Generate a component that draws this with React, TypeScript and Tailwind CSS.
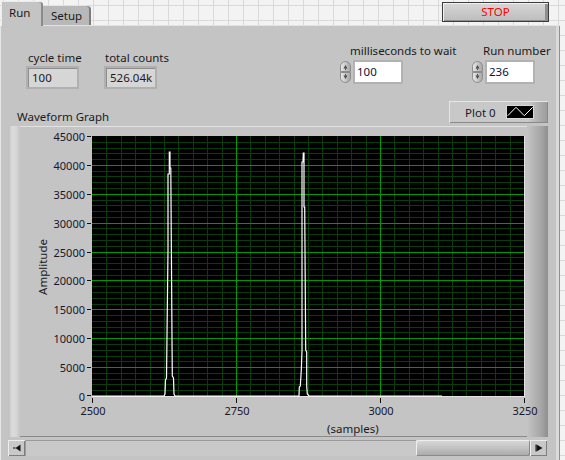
import React from 'react';

const X_MIN = 2500;
const X_MAX = 3250;
const Y_MAX = 45000;
const PLOT_W = 432;
const PLOT_H = 260;
const PAD_L = 6;

const px = (x: number) => PAD_L + ((x - X_MIN) / (X_MAX - X_MIN)) * PLOT_W;
const py = (y: number) => PLOT_H - (y / Y_MAX) * PLOT_H;

// trace as screen pixels of the original panel (plot corner at 86,136)
const trace: [number, number][] = [
    [92, 396], [164, 396], [165, 394], [165.5, 380], [166.5, 378], [168, 250],
    [168, 174], [169.3, 174], [169.3, 152], [170, 152], [170, 168], [170.8, 168],
    [172, 340], [172.3, 376], [173.5, 378], [174, 394], [175, 396],
    [299, 396], [299.3, 387], [300.3, 386], [301.3, 370], [302, 350], [302, 162],
    [303, 162], [303.3, 153], [304, 153], [304, 207], [304.7, 207], [305.7, 350],
    [306.7, 352], [306.7, 386], [307.3, 394], [309, 396], [442, 396],
];

const yTicks = [45000, 40000, 35000, 30000, 25000, 20000, 15000, 10000, 5000, 0];
const xTicks = [2500, 2750, 3000, 3250];

function Spinner() {
    return (
        <svg width="13" height="24" viewBox="0 0 13 24" className="shrink-0">
            <defs>
                <linearGradient id="spin" x1="0" x2="1">
                    <stop offset="0" stopColor="#ececec" />
                    <stop offset="1" stopColor="#a4a4a4" />
                </linearGradient>
            </defs>
            <path d="M1.5 11.5 V6.5 a5 5 0 0 1 10 0 V11.5 Z" fill="url(#spin)" stroke="#8c8c8c" />
            <path d="M1.5 12.5 V17.5 a5 5 0 0 0 10 0 V12.5 Z" fill="url(#spin)" stroke="#8c8c8c" />
            <path d="M4.5 8.5 L6.5 5 L8.5 8.5 Z" fill="#4a4a4a" />
            <path d="M6 8.5 H7 V10 H6 Z" fill="#4a4a4a" />
            <path d="M4.5 15.5 L6.5 19 L8.5 15.5 Z" fill="#4a4a4a" />
            <path d="M6 14 H7 V15.5 H6 Z" fill="#4a4a4a" />
        </svg>
    );
}

function NumericControl({ label, value, labelPad }: { label: string; value: string; labelPad: string }) {
    return (
        <div className="flex flex-col">
            <span className={`${labelPad} leading-[15px] whitespace-nowrap`}>{label}</span>
            <div className="mt-[2px] flex h-[24px] items-center">
                <Spinner />
                <div className="ml-px flex h-[24px] w-[50px] items-center border-2 border-[#b2b2b2] bg-white pl-[2px] text-[#10103a]">
                    {value}
                </div>
            </div>
        </div>
    );
}

function Indicator({ label, value, labelPad }: { label: string; value: string; labelPad: string }) {
    return (
        <div className="flex flex-col">
            <span className={`${labelPad} leading-[15px] whitespace-nowrap`}>{label}</span>
            <div className="mt-px flex h-[23px] w-[53px] items-center border-2 border-[#b0b0b0] bg-[#d6d6d6] pl-[4px] shadow-[inset_1px_1px_0_#8e8e8e]">
                {value}
            </div>
        </div>
    );
}

function Plot() {
    const minorV: number[] = [];
    const majorV: number[] = [];
    for (let i = 1; i < 30; i++) {
        const x = Math.round(PAD_L + i * 14.4) + 0.5;
        (i % 10 === 0 ? majorV : minorV).push(x);
    }
    const minorH: number[] = [];
    const majorH: number[] = [];
    for (let j = 1; j < 45; j++) {
        const y = Math.round((j * PLOT_H) / 45) + 0.5;
        (j % 5 === 0 ? majorH : minorH).push(y);
    }
    const points = trace.map(([x, y]) => `${x - 86},${y - 136}`).join(' ');

    return (
        <svg width="439" height="268" viewBox="0 0 439 268" className="ml-px mt-[6px] shrink-0">
            <rect x={PAD_L} y="0" width={PLOT_W} height={PLOT_H} fill="#000" />
            <g shapeRendering="crispEdges" strokeWidth="1">
                {minorV.map((x) => (
                    <line key={`mv${x}`} x1={x} x2={x} y1="0" y2={PLOT_H} stroke="#0a3d0a" />
                ))}
                {minorH.map((y) => (
                    <line key={`mh${y}`} x1={PAD_L} x2={PAD_L + PLOT_W} y1={y} y2={y} stroke="#0a3d0a" />
                ))}
                {majorV.map((x) => (
                    <line key={`Mv${x}`} x1={x} x2={x} y1="0" y2={PLOT_H} stroke="#009a00" />
                ))}
                {majorH.map((y) => (
                    <line key={`Mh${y}`} x1={PAD_L} x2={PAD_L + PLOT_W} y1={y} y2={y} stroke="#009a00" />
                ))}
                <line x1={PAD_L} x2={PAD_L + PLOT_W + 1} y1={PLOT_H + 0.5} y2={PLOT_H + 0.5} stroke="#e4e4e4" />
                <line x1={PAD_L + PLOT_W + 0.5} x2={PAD_L + PLOT_W + 0.5} y1="0" y2={PLOT_H + 1} stroke="#e4e4e4" />
                {yTicks.map((v) => {
                    const y = Math.min(Math.round(py(v)) + 0.5, PLOT_H - 0.5);
                    return <line key={`yt${v}`} x1="1" x2="5" y1={y} y2={y} stroke="#111" />;
                })}
                {xTicks.map((v) => {
                    const x = Math.round(px(v)) + 0.5;
                    return <line key={`xt${v}`} x1={x} x2={x} y1={PLOT_H + 2} y2={PLOT_H + 7} stroke="#111" />;
                })}
            </g>
            <polyline points={points} fill="none" stroke="#fff" strokeWidth="1.2" />
        </svg>
    );
}

function ArrowLeft() {
    return (
        <svg width="10" height="10" viewBox="0 0 10 10">
            <path d="M1 4.5 H3.5 V5.5 H1 Z" fill="#111" />
            <path d="M3.5 5 L8.5 1.5 V8.5 Z" fill="#111" />
        </svg>
    );
}

function ArrowRight() {
    return (
        <svg width="10" height="10" viewBox="0 0 10 10">
            <path d="M1.5 1.5 H2.5 V8.5 H1.5 Z" fill="#111" />
            <path d="M2.5 1.5 L8.5 5 L2.5 8.5 Z" fill="#111" />
        </svg>
    );
}

export default function App() {
    return (
        <div className="h-[460px] w-[565px] overflow-hidden bg-[#f3f3f3] bg-[linear-gradient(to_right,#d9d9d9_1px,transparent_1px),linear-gradient(to_bottom,#d9d9d9_1px,transparent_1px)] bg-[size:15px_15px] bg-[position:3px_5px] font-['Noto_Sans',sans-serif] text-[11.5px] text-[#1a1a1a]">
            {/* tabs + stop */}
            <div className="flex h-[26px] items-end">
                <div className="ml-[1px] h-[25px] w-[42px] rounded-tr-[3px] border-t border-l border-[#ececec] bg-[#c4c4c4] pt-[3px] pl-[7px] leading-[15px] shadow-[inset_-2px_0_0_#8a8a8a]">
                    Run
                </div>
                <div className="h-[21px] w-[48px] rounded-tr-[4px] border-t border-b border-[#e2e2e2] bg-[#b8b8b8] pt-[2px] pl-[8px] leading-[15px] shadow-[inset_-2px_0_0_#7c7c7c]">
                    Setup
                </div>
                <div className="mr-[5px] flex h-[26px] flex-1 items-start border-b border-[#e2e2e2]">
                    <button className="mt-[2px] mr-[11px] ml-auto flex h-[20px] w-[107px] items-center justify-center border border-[#3c3c3c] bg-[linear-gradient(to_bottom,#d6d6d6,#bdbdbd)] leading-none text-[#ff0000] shadow-[inset_1px_1px_0_#f2f2f2,inset_-3px_-1px_0_#8e8e8e]">
                        STOP
                    </button>
                </div>
            </div>

            {/* tab body */}
            <div className="flex h-[434px] w-[560px] flex-col border-r border-l border-[#8e8e8e] border-l-[#e6e6e6] bg-[#c4c4c4] shadow-[inset_-3px_0_0_#dadada]">
                <div className="flex items-start pt-[17px] pl-[25px]">
                    <div className="mt-[7px] w-[78px]">
                        <Indicator label="cycle time" value="100" labelPad="pl-[2px]" />
                    </div>
                    <div className="mt-[7px] w-[235px]">
                        <Indicator label="total counts" value="526.04k" labelPad="pl-[1px]" />
                    </div>
                    <div className="w-[132px]">
                        <NumericControl label="milliseconds to wait" value="100" labelPad="pl-[11px]" />
                    </div>
                    <div>
                        <NumericControl label="Run number" value="236" labelPad="pl-[12px]" />
                    </div>
                </div>

                <div className="mt-[12px] flex h-[25px] items-start">
                    <span className="pt-[8px] pl-[16px] leading-[15px]">Waveform Graph</span>
                    <div className="mr-[11px] ml-auto flex h-[22px] w-[99px] items-center bg-[linear-gradient(to_right,#c8c8c8_80%,#9a9a9a)] pl-[16px] shadow-[inset_1px_1px_0_#e6e6e6,inset_-1px_-1px_0_#8a8a8a]">
                        <span className="leading-[15px]">Plot 0</span>
                        <div className="mr-[14px] ml-auto h-[14px] w-[28px] border border-[#d8d8d8] bg-black">
                            <svg width="26" height="12" viewBox="0 0 26 12" className="block">
                                <polyline points="0.7,9.7 9,1.3 17.3,9.7 25.7,1.3" fill="none" stroke="#fff" strokeWidth="1" />
                            </svg>
                        </div>
                    </div>
                </div>

                {/* graph frame */}
                <div className="ml-[7px] flex h-[311px] w-[540px] shadow-[inset_0_1px_0_#e2e2e2,inset_0_-1px_0_#8a8a8a]">
                    <div className="w-[12px] shrink-0 bg-[linear-gradient(to_right,#bdbdbd,#dcdcdc_35%,#d6d6d6_70%,#c4c4c4)]" />
                    <div className="flex w-[507px] flex-col">
                        <div className="flex items-start pt-[4px]">
                            <div className="flex h-[274px] w-[30px] items-center justify-end">
                                <span className="rotate-180 leading-[15px] [writing-mode:vertical-rl]">Amplitude</span>
                            </div>
                            <div className="flex h-[274px] w-[35px] flex-col justify-between text-right text-[11px] text-[#16162c]">
                                {yTicks.map((v) => (
                                    <span key={v} className="h-[14px] leading-[14px]">
                                        {v}
                                    </span>
                                ))}
                            </div>
                            <Plot />
                        </div>
                        <div className="relative z-10 ml-[53px] flex h-[14px] w-[472px] justify-between text-[11px] text-[#16162c]">
                            {xTicks.map((v) => (
                                <span key={v} className="w-[40px] text-center leading-[14px]">
                                    {v}
                                </span>
                            ))}
                        </div>
                        <span className="mt-[3px] ml-[307px] leading-[15px]">(samples)</span>
                    </div>
                    <div className="w-[21px] shrink-0 bg-[linear-gradient(to_right,#c4c4c4,#a4a4a4_70%,#8e8e8e)]" />
                </div>

                {/* scrollbar */}
                <div className="mt-[3px] ml-[7px] flex h-[16px] w-[539px]">
                    <div className="flex w-[17px] items-center justify-center bg-[#c8c8c8] shadow-[inset_1px_1px_0_#ededed,inset_-1px_-1px_0_#7e7e7e]">
                        <ArrowLeft />
                    </div>
                    <div className="flex-1 border-t border-l border-[#9a9a9a] bg-[#c9c9c9]" />
                    <div className="w-[114px] rounded-[2px] bg-[linear-gradient(to_bottom,#dadada,#c2c2c2_50%,#a8a8a8)] shadow-[inset_1px_1px_0_#eeeeee,inset_-1px_-1px_0_#8a8a8a]" />
                    <div className="flex w-[17px] items-center justify-center bg-[#c8c8c8] shadow-[inset_1px_1px_0_#ededed,inset_-1px_-1px_0_#7e7e7e]">
                        <ArrowRight />
                    </div>
                </div>
            </div>
        </div>
    );
}
